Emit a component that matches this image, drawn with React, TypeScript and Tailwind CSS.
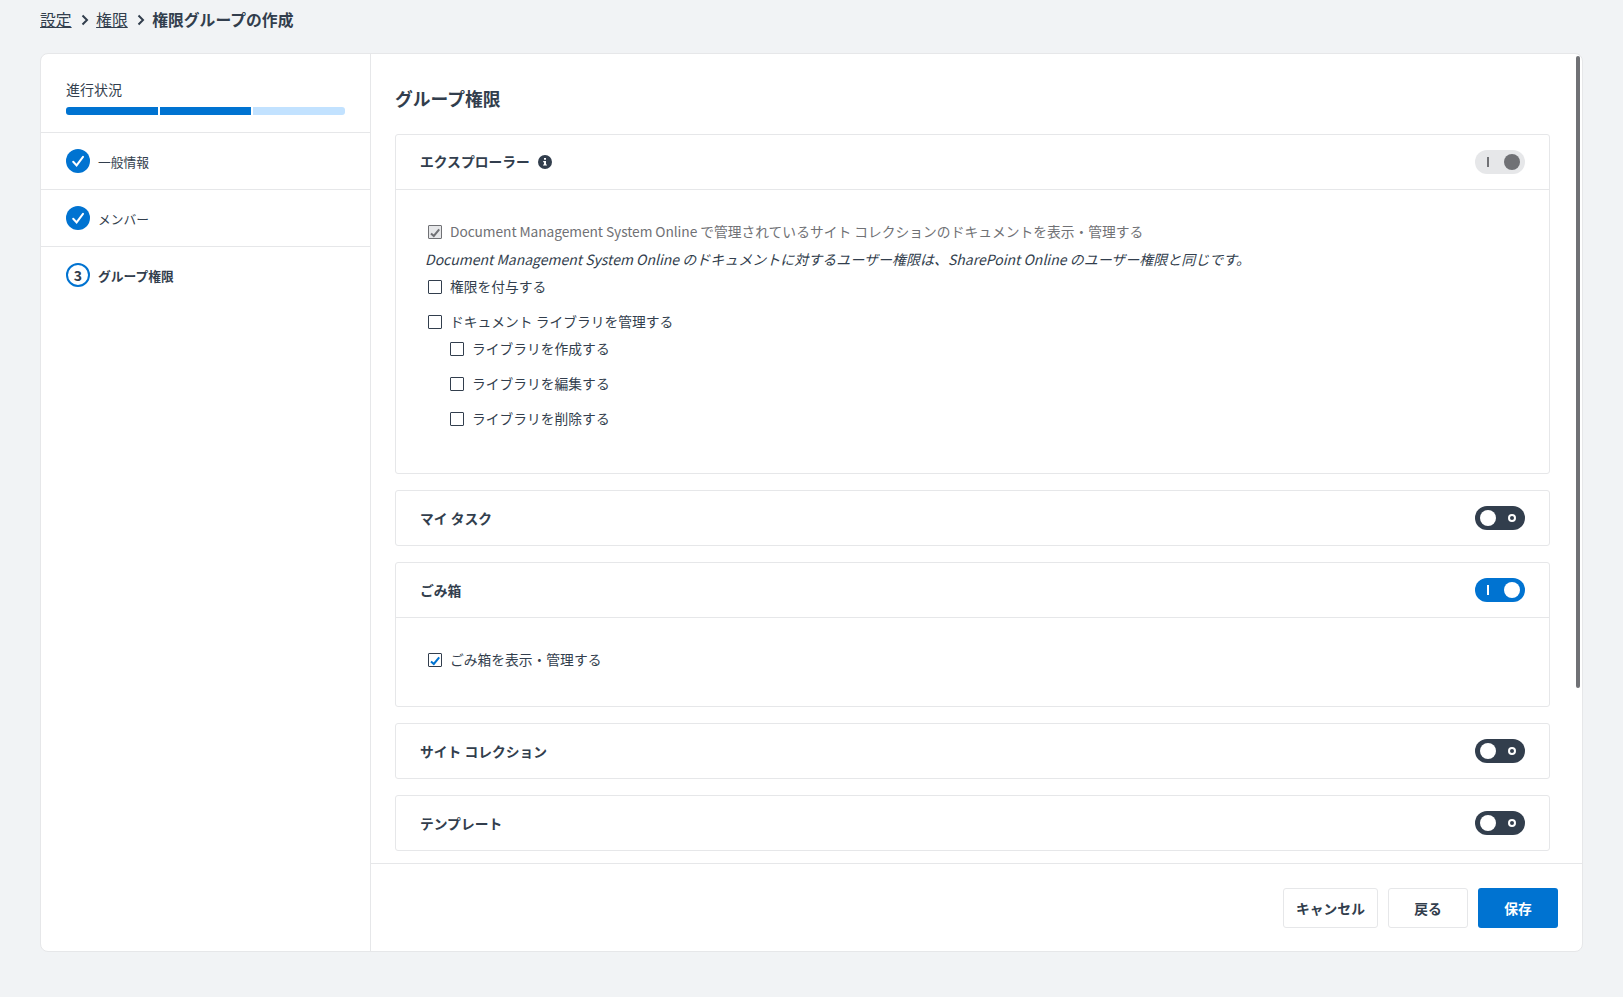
import React from "react";
import clsx from "clsx";

const steps = [
  { label: "一般情報", done: true },
  { label: "メンバー", done: true },
  { label: "グループ権限", done: false },
];

const Chevron = () => (
  <svg className="w-2 h-3 ml-[9px] mr-[7.5px]" viewBox="0 0 8 12" fill="none">
    <path d="M1.5 1.5 L6 6 L1.5 10.5" stroke="#323e4d" strokeWidth="2" />
  </svg>
);

const InfoIcon = () => (
  <svg className="w-[14px] h-[14px] ml-2" viewBox="0 0 14 14">
    <circle cx="7" cy="7" r="7" fill="#323e4d" />
    <path d="M6 3h2v1.8H6zM5.2 6H8v3.4h.9v1.2H5.1V9.4H6V7.2h-.8z" fill="#fff" />
  </svg>
);

type ToggleState = "on" | "off" | "locked";

const Toggle = ({ state }: { state: ToggleState }) => {
  const isOff = state === "off";
  return (
    <button
      className={clsx(
        "w-[50px] h-6 rounded-full flex items-center justify-between px-[5px]",
        state === "on" && "bg-[#0073d1]",
        state === "off" && "bg-[#323e4d]",
        state === "locked" && "bg-[#e6e7e9]"
      )}
    >
      {isOff ? (
        <>
          <span className="w-4 h-4 rounded-full bg-white" />
          <span className="w-2 h-2 mr-1 rounded-full border-2 border-white" />
        </>
      ) : (
        <>
          <span
            className={clsx("w-[2px] h-[10px] ml-[7px]", state === "on" ? "bg-white" : "bg-[#707175]")}
          />
          <span
            className={clsx("w-4 h-4 rounded-full", state === "on" ? "bg-white" : "bg-[#707175]")}
          />
        </>
      )}
    </button>
  );
};

type CheckProps = {
  label: React.ReactNode;
  checked?: boolean;
  disabled?: boolean;
  className?: string;
};

const Check = ({ label, checked, disabled, className }: CheckProps) => (
  <label className={clsx("flex items-center h-5", className)}>
    <span
      className={clsx(
        "w-[14px] h-[14px] shrink-0 rounded-[1px] border flex items-center justify-center",
        disabled ? "border-[#707175] bg-[#e6e7e9]" : "border-[#323e4d] bg-white"
      )}
    >
      {checked && (
        <svg className="w-3 h-3" viewBox="0 0 12 12" fill="none">
          <path d="M2 7.4 L4.8 10 L10.2 3.4" stroke={disabled ? "#707175" : "#0073d1"} strokeWidth="2" />
        </svg>
      )}
    </span>
    <span className={clsx("ml-2 pb-[2px] whitespace-nowrap", disabled && "text-[#707175]")}>{label}</span>
  </label>
);

type SectionProps = {
  title: string;
  state: ToggleState;
  info?: boolean;
  children?: React.ReactNode;
};

const Section = ({ title, state, info, children }: SectionProps) => (
  <section className="border border-[#e6e7e9] rounded-[3px] shrink-0">
    <div className="h-[54px] pl-6 pr-6 flex items-center justify-between">
      <h3 className="flex items-center font-bold">
        <span className={info ? "pb-[2px]" : "pb-px"}>{title}</span>
        {info && <InfoIcon />}
      </h3>
      <Toggle state={state} />
    </div>
    {children && <div className="border-t border-[#e6e7e9] pl-8">{children}</div>}
  </section>
);

const Sidebar = () => (
  <aside className="w-[330px] shrink-0 border-r border-[#e6e7e9]">
    <div className="h-[79px] px-[25px] pt-[25px] border-b border-[#e6e7e9]">
      <p className="leading-5 text-sm">進行状況</p>
      <div className="flex gap-[2px] mt-2">
        <span className="h-2 flex-1 bg-[#0073d1] rounded-l-[3px]" />
        <span className="h-2 flex-1 bg-[#0073d1]" />
        <span className="h-2 flex-1 bg-[#c2e2ff] rounded-r-[3px]" />
      </div>
    </div>
    {steps.map((step, i) => (
      <div
        key={step.label}
        className={clsx(
          "px-[25px] flex items-center text-[12.75px]",
          step.done ? "h-[57px] border-b border-[#e6e7e9]" : "h-14 font-bold"
        )}
      >
        {step.done ? (
          <svg className="w-6 h-6 mr-2" viewBox="0 0 24 24" fill="none">
            <circle cx="12" cy="12" r="12" fill="#0073d1" />
            <path d="M7.2 12.8 L10.6 16.4 L17 7.8" stroke="#fff" strokeWidth="2" strokeLinecap="round" />
          </svg>
        ) : (
          <span className="w-6 h-6 mr-2 rounded-full border-2 border-[#0073d1] flex items-center justify-center text-sm">
            {i + 1}
          </span>
        )}
        <span className="pt-px">{step.label}</span>
      </div>
    ))}
  </aside>
);

const App = () => {
  return (
    <div className="h-screen overflow-hidden bg-[#f1f3f5] text-[#323e4d] text-[13.77px] leading-5 font-['Noto_Sans_CJK_JP',sans-serif]">
      {/* Breadcrumb */}
      <nav className="h-[53px] pl-10 pt-2 flex items-start">
        <div className="flex items-center h-6 text-[15.8px]">
          <a href="#" className="underline">
            設定
          </a>
          <Chevron />
          <a href="#" className="underline">
            権限
          </a>
          <Chevron />
          <span className="font-bold">権限グループの作成</span>
        </div>
      </nav>

      <div className="ml-10 w-[1543px] h-[899px] bg-white border border-[#e6e7e9] rounded-lg flex">
        <Sidebar />
        <main className="flex-1 flex flex-col relative">
          <div className="h-[809px] px-6 overflow-hidden flex flex-col">
            <h2 className="h-20 shrink-0 pt-8 text-[17.75px] leading-6 font-bold">グループ権限</h2>
            <div className="flex flex-col gap-4 pr-2">
              <Section title="エクスプローラー" state="locked" info>
                <div className="h-[283px] pt-8">
                  <Check
                    checked
                    disabled
                    label={
                      <>
                        <span className="tracking-[-0.08px]">Document Management System Online </span>
                        で管理されているサイト コレクションのドキュメントを表示・管理する
                      </>
                    }
                  />
                  <p className="italic text-sm leading-5 mt-[7px] -ml-[3px] whitespace-nowrap">
                    Document Management System Online のドキュメントに対するユーザー権限は、SharePoint Online のユーザー権限と同じです。
                  </p>
                  <Check className="mt-2" label="権限を付与する" />
                  <Check className="mt-[15px]" label="ドキュメント ライブラリを管理する" />
                  <div className="ml-[22px] mt-[7px] flex flex-col gap-[15px]">
                    <Check label="ライブラリを作成する" />
                    <Check label="ライブラリを編集する" />
                    <Check label="ライブラリを削除する" />
                  </div>
                </div>
              </Section>
              <Section title="マイ タスク" state="off" />
              <Section title="ごみ箱" state="on">
                <div className="h-[88px] pt-8">
                  <Check checked label="ごみ箱を表示・管理する" />
                </div>
              </Section>
              <Section title="サイト コレクション" state="off" />
              <Section title="テンプレート" state="off" />
            </div>
          </div>

          {/* Scrollbar thumb */}
          <div className="absolute top-[2px] right-[2px] w-1 h-[632px] rounded-sm bg-[#707175]" />

          {/* Footer actions */}
          <div className="flex-1 border-t border-[#e6e7e9] px-6 pt-6 flex items-start justify-end gap-[10px] font-bold">
            <button className="w-[95px] h-10 border border-[#e6e7e9] rounded-[3px]">キャンセル</button>
            <button className="w-20 h-10 border border-[#e6e7e9] rounded-[3px]">戻る</button>
            <button className="w-20 h-10 bg-[#0073d1] text-white rounded-[3px]">保存</button>
          </div>
        </main>
      </div>
    </div>
  );
};

export default App;
